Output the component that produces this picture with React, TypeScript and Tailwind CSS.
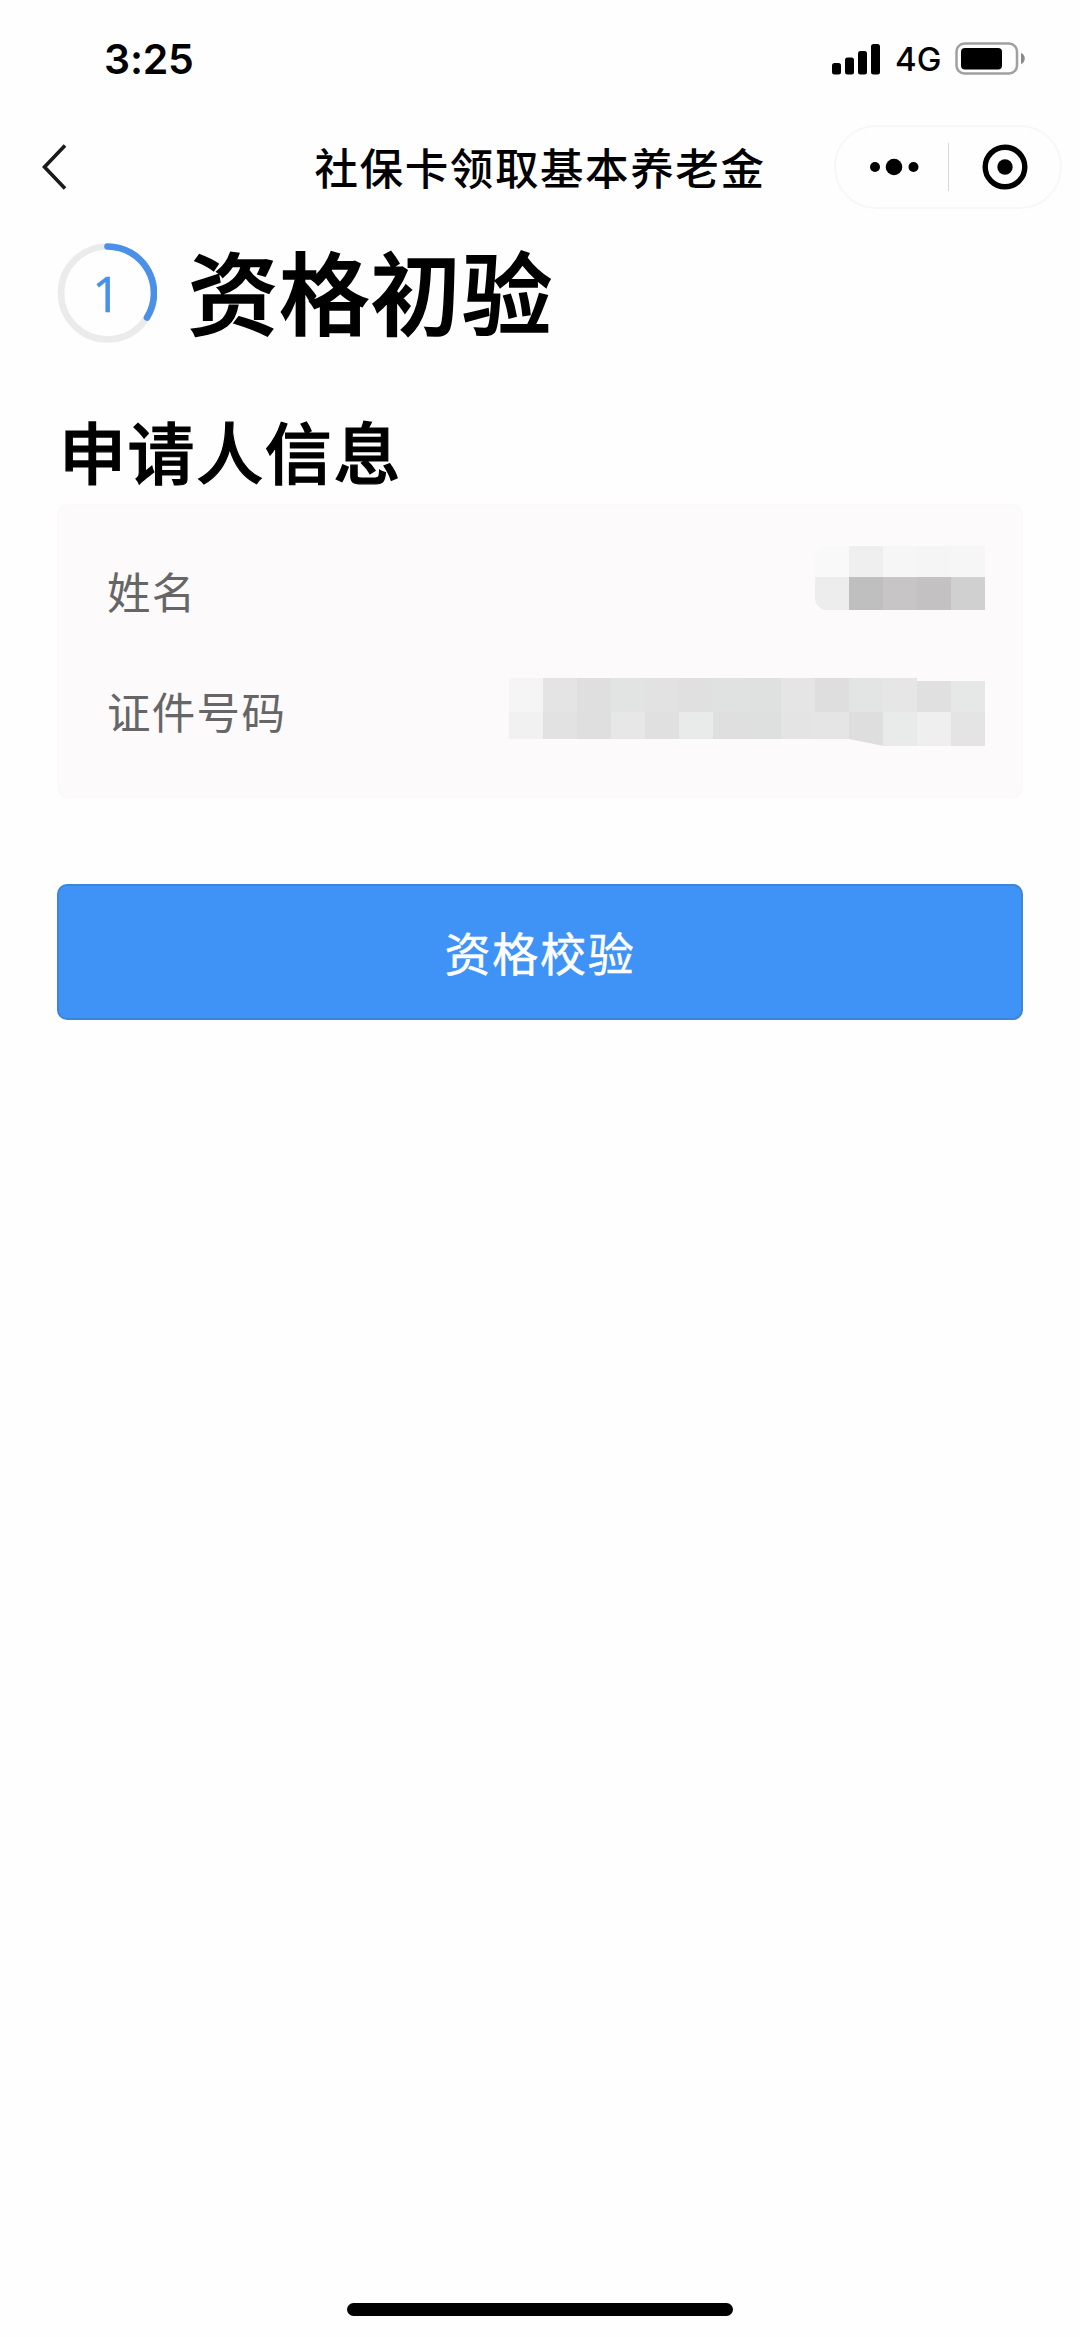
const nameMosaic = [
  ['#faf9fa', '#eeefee', '#f6f6f6', '#f5f5f5', '#f6f6f6'],
  ['#eeedee', '#bfbfbf', '#c7c5c6', '#c3c1c2', '#d0d0d0'],
]

const idMosaic = [
  ['#f6f5f6', '#e5e4e5', '#e0dfe0', '#e2e4e3', '#e3e2e3', '#e0e0e0', '#e0e2e1', '#dfe1e0', '#e6e5e6', '#dfdedf', '#e3e5e4', '#e6e6e6', '#e1e0e1', '#e6e8e7'],
  ['#f2f1f2', '#e3e2e3', '#e0dfe0', '#e8e7e8', '#e1e0e1', '#e9ebea', '#e0dfe0', '#dee0df', '#e5e4e5', '#e6e5e6', '#dfdedf', '#e9ebea', '#f0eff0', '#e5e4e5'],
]

function StatusBar() {
  return (
    <div className="flex h-[118px] items-center justify-between pl-[104px] pr-[54px] font-['Inter',sans-serif] text-black">
      <span className="text-[41px] font-semibold leading-none tracking-[-0.2px]">3:25</span>
      <div className="flex items-center">
        <svg width="49" height="32" viewBox="0 0 49 32">
          <rect x="0" y="20" width="9" height="11.5" rx="2.5" />
          <rect x="13" y="14.5" width="9" height="17" rx="2.5" />
          <rect x="26" y="8" width="9" height="23.5" rx="2.5" />
          <rect x="39" y="1" width="9" height="30.5" rx="2.5" />
        </svg>
        <span className="ml-[14px] w-[46px] text-[33px] font-medium leading-none">4G</span>
        <svg className="ml-[14px]" width="71" height="34" viewBox="0 0 71 34">
          <rect x="1.5" y="1.5" width="60.5" height="30" rx="8" fill="none" stroke="#a0a0a0" strokeWidth="2.5" />
          <rect x="6" y="6" width="41" height="21.5" rx="4" />
          <path d="M66 11v11c5-1.500 5-9.500 0-11z" fill="#8a8a8a" />
        </svg>
      </div>
    </div>
  )
}

function NavBar() {
  return (
    <header className="grid h-[98px] grid-cols-[1fr_auto_1fr] items-center pl-[40px] pr-[18px]">
      <svg width="30" height="48" viewBox="0 0 30 48" fill="none" stroke="#1a1a1a" strokeWidth="3.6">
        <path d="M25 2.500 4.500 24 25 45.500" />
      </svg>
      <h1 className="mr-[20px] -ml-[2px] text-[43.5px] font-medium leading-none tracking-[1.6px] text-black">社保卡领取基本养老金</h1>
      <div className="flex h-[84px] w-[228px] items-center justify-self-end rounded-full border-2 border-[#f7f7f7]">
        <svg className="ml-[33px]" width="52" height="20" viewBox="0 0 52 20">
          <circle cx="6" cy="10" r="5" />
          <circle cx="25" cy="10" r="8.3" />
          <circle cx="44.5" cy="10" r="5" />
        </svg>
        <div className="ml-[27px] h-12 w-px bg-[#d9d9d9]" />
        <svg className="ml-[33px]" width="46" height="46" viewBox="0 0 46 46">
          <circle cx="23" cy="23" r="19.8" fill="none" stroke="#000" strokeWidth="5.4" />
          <circle cx="23" cy="23" r="7.7" />
        </svg>
      </div>
    </header>
  )
}

function StepRing() {
  return (
    <svg width="100" height="100" viewBox="0 0 100 100" fill="none" strokeWidth="6.6">
      <circle cx="50.5" cy="50" r="46.5" stroke="#ebebeb" />
      <path d="M50.5 3.5A46.5 46.5 0 0 1 90 74.5" stroke="#4a90e8" strokeLinecap="round" />
      <text x="49.5" y="68.5" textAnchor="middle" fill="#4a90e8" stroke="#4a90e8" strokeWidth="0.6" fontSize="49" className="font-['Open_Sans',sans-serif]">
        1
      </text>
    </svg>
  )
}

function Mosaic({ rows, heights, className }: { rows: string[][]; heights: number[]; className?: string }) {
  return (
    <div className={className}>
      {rows.map((row, i) => (
        <div key={i} className="flex" style={{ height: heights[i] }}>
          {row.map((color, j) => (
            <div key={j} className="w-[34px]" style={{ backgroundColor: color }} />
          ))}
        </div>
      ))}
    </div>
  )
}

export default function App() {
  return (
    <div className="flex h-[2337px] w-[1080px] flex-col bg-[#fefefe] font-['Noto_Sans_CJK_SC',sans-serif]">
      <StatusBar />
      <NavBar />

      <main className="flex-1 px-[57px]">
        <div className="flex h-[154px] items-center">
          <StepRing />
          <h2 className="mb-[9px] ml-[31px] text-[90px] font-medium leading-none tracking-[1.3px] text-black [-webkit-text-stroke:1.6px_black]">
            资格初验
          </h2>
        </div>

        <h3 className="ml-[2px] mt-[44px] text-[67px] font-medium leading-[72px] tracking-[1.6px] text-black [-webkit-text-stroke:1.2px_black]">
          申请人信息
        </h3>

        <section className="mt-[18px] h-[294px] rounded-[10px] border-2 border-[#fafafa] bg-[#fcfafb] pl-[48px] pr-[36px]">
          <div className="flex h-[172px] justify-between">
            <span className="mt-[61px] text-[43.5px] leading-[48px] tracking-[1.3px] text-[#666]">姓名</span>
            <Mosaic rows={nameMosaic} heights={[31, 33]} className="mt-[40px] self-start overflow-hidden rounded-l-[12px]" />
          </div>
          <div className="flex justify-between">
            <span className="mt-[9px] text-[43.5px] leading-[48px] tracking-[1.3px] text-[#666]">证件号码</span>
            <Mosaic
              rows={idMosaic}
              heights={[34, 34]}
              className="[clip-path:polygon(0_0,408px_0,408px_3px,100%_3px,100%_100%,375px_100%,340px_61px,0_61px)]"
            />
          </div>
        </section>

        <button className="mt-[86px] flex h-[136px] w-full items-center justify-center rounded-[10px] border-2 border-[#3f84d6] bg-[#4093f6] pb-[2px] text-[46px] leading-none tracking-[1.8px] text-white [-webkit-text-stroke:0.5px_white]">
          资格校验
        </button>
      </main>

      <div className="mb-[21px] h-[13px] w-[386px] self-center rounded-full bg-black" />
    </div>
  )
}
